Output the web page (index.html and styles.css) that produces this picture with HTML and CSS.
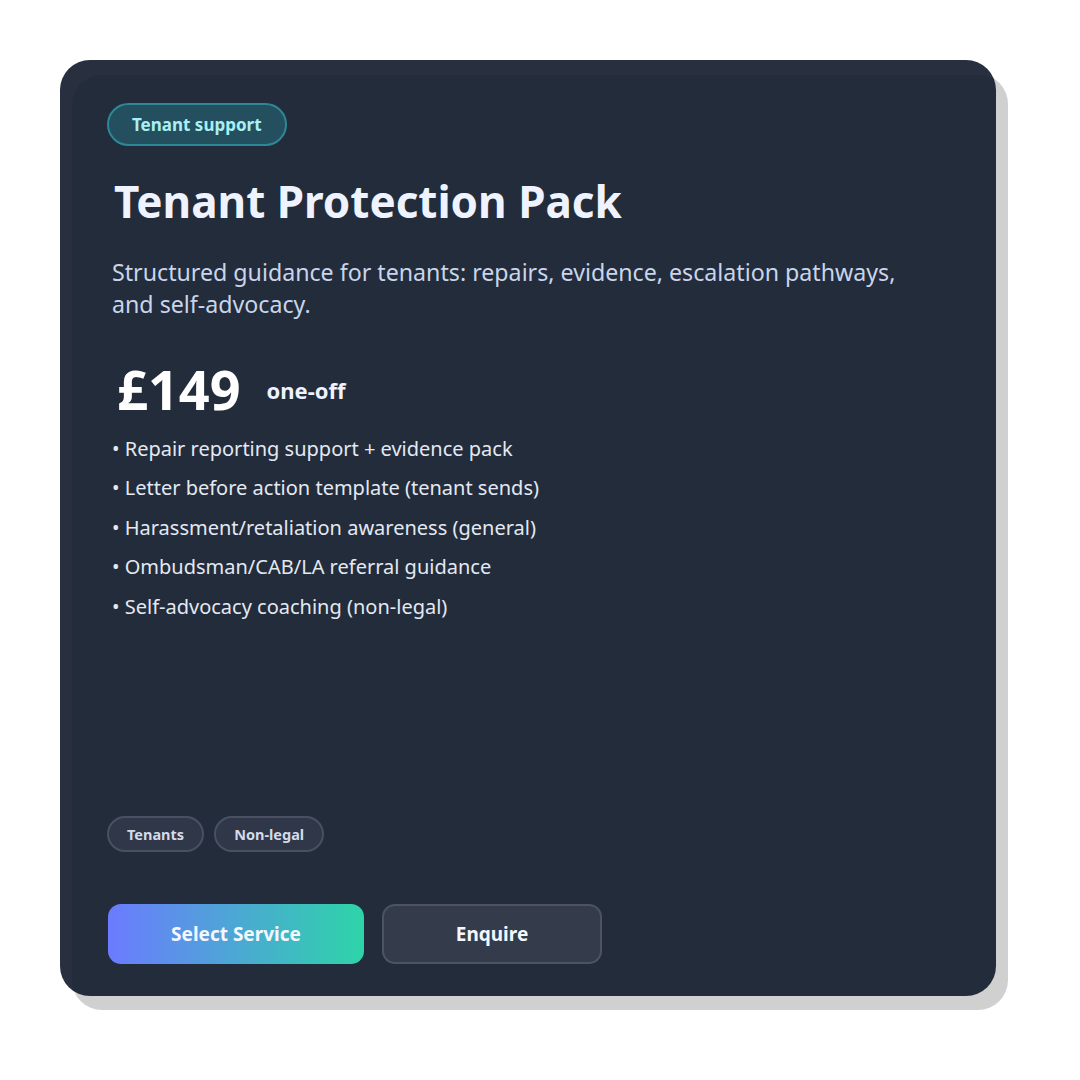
FILE: index.html
```html
<!DOCTYPE html>
<html lang="en">
<head>
<meta charset="utf-8">
<title>Tenant Protection Pack</title>
<link rel="stylesheet" href="styles.css">
</head>
<body>
<div class="card">
  <span class="badge">Tenant support</span>
  <h1 class="title">Tenant Protection Pack</h1>
  <p class="desc">Structured guidance for tenants: repairs, evidence, escalation pathways, and self-advocacy.</p>
  <div class="price">
    <span class="amount">£149</span>
    <span class="period">one-off</span>
  </div>
  <ul class="features">
    <li>• Repair reporting support + evidence pack</li>
    <li>• Letter before action template (tenant sends)</li>
    <li>• Harassment/retaliation awareness (general)</li>
    <li>• Ombudsman/CAB/LA referral guidance</li>
    <li>• Self-advocacy coaching (non-legal)</li>
  </ul>
  <div class="tags">
    <span class="tag">Tenants</span>
    <span class="tag">Non-legal</span>
  </div>
  <div class="actions">
    <button class="btn btn-primary">Select Service</button>
    <button class="btn btn-secondary">Enquire</button>
  </div>
</div>
</body>
</html>
```

FILE: styles.css
```css
* { box-sizing: border-box; }
html, body { margin: 0; background: #ffffff; }
body {
  padding: 60px;
  font-family: "Noto Sans", "Open Sans", sans-serif;
}
.card {
  width: 936px;
  height: 936px;
  background: #232c3b;
  border-radius: 30px;
  box-shadow: 12px 14px 0 #d0d0d0, inset 12px 15px 0 rgba(255,255,255,0.025);
  padding: 43px 47px 32px 48px;
  display: flex;
  flex-direction: column;
  align-items: flex-start;
}
.badge {
  display: inline-flex;
  align-items: center;
  height: 43px;
  margin-left: -1px;
  padding: 0 23px;
  border: 2px solid #2e8796;
  background: #244f5e;
  border-radius: 22px;
  color: #a9eff5;
  font-weight: 700;
  font-size: 17px;
}
.title {
  margin: 27px 0 0 6px;
  font-size: 44px;
  line-height: 56px;
  font-weight: 700;
  color: #eef3ff;
}
.desc {
  margin: 27px 0 0 4px;
  font-size: 23.2px;
  line-height: 32px;
  color: #c9d5ea;
  max-width: 810px;
}
.price {
  margin: 39px 0 0 9px;
  display: flex;
  align-items: baseline;
  gap: 26px;
  height: 60px;
}
.amount {
  font-size: 54px;
  font-weight: 700;
  color: #ffffff;
  line-height: 60px;
}
.period {
  font-size: 22px;
  font-weight: 700;
  color: #eef3ff;
  position: relative;
  top: -11px;
}
.features {
  list-style: none;
  margin: 9.5px 0 0 4px;
  padding: 0;
  color: #e3e9f3;
  font-size: 20px;
  line-height: 39.5px;
}
.tags {
  margin-top: auto;
  display: flex;
  gap: 10px;
  margin-left: -1px;
}
.tag {
  display: inline-flex;
  align-items: center;
  height: 36px;
  padding: 0 18px;
  border: 2px solid #485062;
  background: #2f3748;
  border-radius: 18px;
  color: #d3dbea;
  font-weight: 700;
  font-size: 14.5px;
}
.actions {
  margin-top: 52px;
  display: flex;
  gap: 18px;
}
.btn {
  height: 60px;
  border-radius: 13px;
  font-family: inherit;
  font-weight: 700;
  font-size: 19px;
  color: #f4f7ff;
  cursor: pointer;
}
.btn-primary {
  width: 256px;
  border: none;
  background: linear-gradient(90deg, #6b7bff 0%, #2dd4a8 100%);
}
.btn-secondary {
  width: 220px;
  border: 2px solid #4b5364;
  background: #343c4b;
}
```
